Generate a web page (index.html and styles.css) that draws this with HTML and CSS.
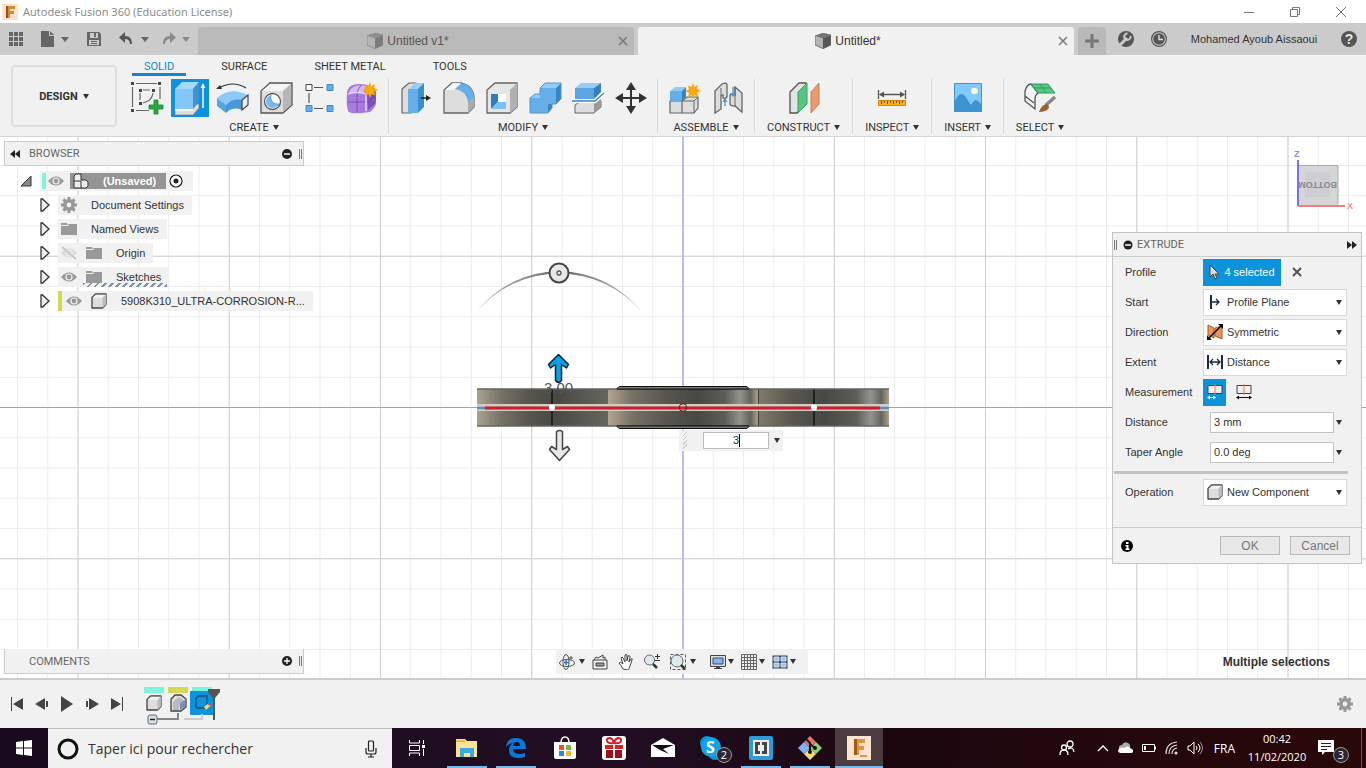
FILE: index.html
```html
<!DOCTYPE html>
<html lang="en">
<head>
    <meta charset="UTF-8">
    <meta name="viewport" content="width=device-width, initial-scale=1.0">
    <title>Autodesk Fusion 360 (Education License)</title>
    <link rel="stylesheet" href="styles.css">
</head>
<body>
    <!-- shared icons -->
    <svg class="defs" aria-hidden="true">
        <symbol id="eye" viewBox="0 0 16 16">
            <path d="M0 8Q8-1 16 8Q8 17 0 8Z" fill="#999"/>
            <circle cx="8" cy="8" r="3.6" fill="#f1f1f1"/>
            <circle cx="8" cy="8" r="2.4" fill="#999"/>
        </symbol>
        <symbol id="folder" viewBox="0 0 16 16">
            <path d="M0 2h6l1 2H0zM8 3h8v11H0V5h7z" fill="#999"/>
        </symbol>
        <symbol id="gear" viewBox="0 0 16 16">
            <circle cx="8" cy="8" r="4.2" fill="none" stroke="#999" stroke-width="3.6"/>
            <path d="M8 0v3M8 13v3M0 8h3M13 8h3M2.4 2.4l2 2M11.6 11.6l2 2M2.4 13.6l2-2M11.6 4.4l2-2" stroke="#999" stroke-width="3"/>
        </symbol>
        <symbol id="expand" viewBox="0 0 10 14">
            <path d="M1 1h1.5L9 7l-6.500 6H1z" fill="#eee" stroke="#333" stroke-width="1.300"/>
        </symbol>
        <symbol id="cube" viewBox="0 0 16 16">
            <path d="M1 4.500L4.500 1H15v10.500L11.500 15H1z" fill="#ddd" stroke="#444" stroke-width="1.300" stroke-linejoin="round"/>
            <path d="M11.500 5L15 1v10.500L11.500 15z" fill="#bbb"/>
            <path d="M1.700 4.700L4.800 1.700h9.500l-3 3z" fill="#f4f4f4"/>
        </symbol>
        <symbol id="doc" viewBox="0 0 16 16">
            <path d="M0 3l8-3 8 2-8 4z" fill="#777"/>
            <path d="M0 3l8 2.500V16L0 12z" fill="#b4b4b4"/>
            <path d="M8 5.500L16 2v10l-8 4z" fill="#555"/>
            <path d="M0 3l8-2.500 8 1.500v10l-8 3.500L0 12z" fill="none" stroke="#666" stroke-width=".8"/>
        </symbol>
        <symbol id="spark" viewBox="0 0 16 16">
            <path d="M8 0l1.500 4L13 2l-1 3.800L16 8l-4 1.500 1.500 4L9.500 12 8 16l-1.600-4L3 14l1-4-4-2 4-1.700L2.500 2.500 6.400 4z" fill="#f9a70d"/>
        </symbol>
    </svg>

    <header class="titlebar">
        <svg class="app-logo" width="16" height="16" viewBox="0 0 16 16">
            <rect width="16" height="16" fill="#fbe3cd"/>
            <path d="M4 2h9v3H8v2h4v3H8v4H4z" fill="#d98a2e"/>
            <path d="M4 2h2v12H4z" fill="#9c5311"/>
        </svg>
        <span class="app-title">Autodesk Fusion 360 (Education License)</span>
        <div class="window-buttons">
            <button aria-label="Minimize"><svg width="12" height="12"><path d="M1 6.500h10" stroke="#777"/></svg></button>
            <button aria-label="Restore"><svg width="12" height="12" fill="none" stroke="#777"><path d="M1.500 3.500h7v7h-7zM3.500 3.500v-2h7v7h-2"/></svg></button>
            <button aria-label="Close"><svg width="12" height="12"><path d="M1 1l10 10M11 1L1 11" stroke="#777"/></svg></button>
        </div>
    </header>

    <div class="tabbar">
        <div class="quick">
            <button aria-label="Data panel"><svg width="14" height="14" fill="#666"><path d="M0 0h4v4H0zM5 0h4v4H5zM10 0h4v4h-4zM0 5h4v4H0zM5 5h4v4H5zM10 5h4v4h-4zM0 10h4v4H0zM5 10h4v4H5zM10 10h4v4h-4z"/></svg></button>
            <button aria-label="File"><svg width="14" height="16" fill="#666"><path d="M0 0h8v5h5v11H0zM9 0l4 4H9z"/></svg><i class="caret"></i></button>
            <button aria-label="Save"><svg width="14" height="14"><path d="M0 0h12l2 2v12H0z" fill="#666"/><path d="M3 1h8v5H3zM2 8h10v5H2z" fill="#cbcbcb"/><path d="M7 1h2v4H7zM4 9h6v1H4zM4 11h6v1H4z" fill="#666"/></svg></button>
            <button aria-label="Undo"><svg width="14" height="14"><path d="M6 0v4c5 0 7 3 7 8h-2c0-3-2-5-5-5v4L0 5.500z" fill="#555"/></svg><i class="caret"></i></button>
            <button aria-label="Redo" class="off"><svg width="14" height="14"><path d="M8 0v4c-5 0-7 3-7 8h2c0-3 2-5 5-5v4l6-5.500z" fill="#888"/></svg><i class="caret"></i></button>
        </div>
        <div class="doc-tab">
            <span class="doc-name"><svg width="16" height="16" opacity=".6"><use href="#doc"/></svg>Untitled v1*</span>
            <button aria-label="Close Untitled v1"><svg width="10" height="10"><path d="M1 1l8 8M9 1L1 9" stroke="#777" stroke-width="1.500"/></svg></button>
        </div>
        <div class="doc-tab active">
            <span class="doc-name"><svg width="16" height="16"><use href="#doc"/></svg>Untitled*</span>
            <button aria-label="Close Untitled"><svg width="10" height="10"><path d="M1 1l8 8M9 1L1 9" stroke="#777" stroke-width="1.500"/></svg></button>
        </div>
        <button class="new-tab" aria-label="New tab"><svg width="14" height="14"><path d="M7 0v14M0 7h14" stroke="#777" stroke-width="3"/></svg></button>
        <div class="account">
            <button aria-label="Extensions"><svg width="16" height="16"><circle cx="8" cy="8" r="8" fill="#555"/><path d="M2 14l7-7" stroke="#cbcbcb" stroke-width="3"/><path d="M12.500 5a3.200 3.200 0 1 1-3-2.500" fill="none" stroke="#cbcbcb" stroke-width="2"/></svg></button>
            <button aria-label="Job status"><svg width="16" height="16"><circle cx="8" cy="8" r="7.400" fill="none" stroke="#555" stroke-width="1.200"/><circle cx="8" cy="8" r="5.800" fill="#555"/><path d="M8 4v4.500h4" fill="none" stroke="#ddd" stroke-width="1.400"/></svg></button>
            <button class="user">Mohamed Ayoub Aissaoui</button>
            <button class="help" aria-label="Help">?</button>
        </div>
    </div>

    <div class="ribbon">
        <button class="workspace">DESIGN <i class="caret"></i></button>
        <div class="ribbon-main">
            <nav class="ribbon-tabs">
                <a href="#solid" class="active">SOLID</a>
                <a href="#surface">SURFACE</a>
                <a href="#sheet">SHEET METAL</a>
                <a href="#tools">TOOLS</a>
            </nav>
            <div class="groups">
                <div class="group">
                    <div class="tools">
                        <button aria-label="Create sketch"><svg width="38" height="38">
                            <path d="M8 4.500h21M4.500 8v20M8 31.500h13M32 8v12M15 11h7M12 14v7M25 14Q24 22 15 24" fill="none" stroke="#666" stroke-width="1.200"/>
                            <path d="M3 3h3v3H3zM30 3h3v3h-3zM3 30h3v3H3zM11 10h3v3h-3zM24 10h3v3h-3zM11 23h3v3h-3z" fill="#444"/>
                            <path d="M26 21h4v5h5v4h-5v5h-4v-5h-5v-4h5z" fill="#27a843" stroke="#168a35" stroke-width=".8"/>
                        </svg></button>
                        <button aria-label="Extrude" class="on"><svg width="38" height="38">
                            <path d="M4 31l7-6h17v4l-6 7H4z" fill="#ddd" stroke="#777" stroke-width=".6"/>
                            <path d="M4 10l7-7h17l-6 7z" fill="#a6d8fb"/><path d="M4 10h18v20H4z" fill="#85c6f9"/>
                            <path d="M22 10l6-7v20l-6 7z" fill="#3e93d3"/><path d="M4 31h18" stroke="#fff" stroke-width="1.500"/>
                            <path d="M32 7v22" stroke="#fff" stroke-width="1.400"/><path d="M32 4l2.500 5h-5z" fill="#fff"/>
                        </svg></button>
                        <button aria-label="Revolve"><svg width="38" height="38">
                            <path d="M3 19Q16 7 34 16l-6 5q-9-3-16 5z" fill="#8ccafa"/>
                            <path d="M3 19l9 7v8l-9-7z" fill="#58a5e2"/><path d="M12 26q7-8 16-5v10q-9-4-16 3z" fill="#4698da"/>
                            <path d="M28 21l6-5v10l-6 5z" fill="#eee" stroke="#444" stroke-width="1.200"/>
                            <path d="M5 9Q19 1 32 9" fill="none" stroke="#333" stroke-width="1.200"/><path d="M2 10l4-4 2 4z" fill="#333"/>
                        </svg></button>
                        <button aria-label="Hole"><svg width="38" height="38">
                            <path d="M4 12l9-8h22v22l-9 8H4z" fill="#ddd" stroke="#555" stroke-width="1.300"/>
                            <path d="M5 12l8-7h21l-8 7z" fill="#f5f5f5"/><path d="M26 12l8-7v21l-8 7z" fill="#b6b6b6"/>
                            <circle cx="15.500" cy="22.500" r="8" fill="#fff" stroke="#555" stroke-width="1.300"/>
                            <path d="M14 16a7 7 0 0 0 8 9q-2 4-7 4-6-1-6-7 1-5 5-6z" fill="#77baf0"/><path d="M14 16a7 7 0 0 0 8 9" fill="none" stroke="#4a97d2"/>
                        </svg></button>
                        <button aria-label="Pattern"><svg width="38" height="38">
                            <path d="M14 8.500h9M9 14v10M14 29.500h9" stroke="#555" stroke-width="1.200"/>
                            <path d="M6 5.500h6v6H6z" fill="#fff" stroke="#444"/>
                            <path d="M27 5.500h6v6h-6zM6 26.500h6v6H6zM27 26.500h6v6h-6z" fill="#64ade8" stroke="#3f8ac4"/>
                        </svg></button>
                        <button aria-label="Create form"><svg width="38" height="38">
                            <path d="M4 15q0-10 12-10 17 0 17 10v9q0 4-6 9-20 3-22-1-2-7-1-17z" fill="#a57be0"/>
                            <path d="M6 13q4-9 17-6l-2 7q-10-1-15 1z" fill="#d1b9f5"/><path d="M24 16l8-5q2 7 0 14l-7 6z" fill="#7f50bb"/>
                            <path d="M5 23h20l7-7M14 14v19M14 13l4-7" fill="none" stroke="#6d45a5" stroke-width=".8"/>
                            <path d="M5 15q8-3 18 0v17" fill="none" stroke="#e4d6fa" stroke-width="1.500"/>
                            <use href="#spark" x="19" y="3" width="16" height="16"/>
                        </svg></button>
                    </div>
                    <button class="group-name">CREATE <i class="caret"></i></button>
                </div>
                <div class="group">
                    <div class="tools">
                        <button aria-label="Press pull"><svg width="38" height="38">
                            <path d="M5 10l7-6h7v24l-5 6H5z" fill="#ddd" stroke="#666" stroke-width="1.200"/>
                            <path d="M12 10l6-6h9l-6 6z" fill="#94cffb"/><path d="M11 10h10v24H11z" fill="#65aee7"/><path d="M21 10l6-6v24l-6 6z" fill="#3a8ccb"/>
                            <path d="M24 19h8" stroke="#222" stroke-width="1.500"/><path d="M29 16l5 3-5 3z" fill="#222"/>
                        </svg></button>
                        <button aria-label="Fillet"><svg width="38" height="38">
                            <path d="M4 11l8-7h9q13 3 13 16v8l-6 6H4z" fill="#ddd" stroke="#666" stroke-width="1.300"/>
                            <path d="M5 11l8-7h8l-7 7z" fill="#f5f5f5"/>
                            <path d="M15 10l7-6q12 3 12 15l-6 5q-1-12-13-14z" fill="#65aee7"/><path d="M28 24l6-5v9l-6 6z" fill="#aaa"/>
                        </svg></button>
                        <button aria-label="Shell"><svg width="38" height="38">
                            <path d="M4 11l8-7h22v24l-7 6H4z" fill="#e6e6e6" stroke="#666" stroke-width="1.300"/>
                            <path d="M27 11l7-7v24l-7 6z" fill="#b0b0b0"/><path d="M8 15h15v15H8z" fill="#fff"/>
                            <path d="M8 15h7v8l-7 7z" fill="#2e7fb9"/><path d="M15 23h8v7H8z" fill="#7cc1f5"/>
                        </svg></button>
                        <button aria-label="Combine"><svg width="38" height="38">
                            <path d="M4 19h10V9h16v16h-5l-3 0v9H4z" fill="#65aee7"/>
                            <path d="M14 9l5-5h16l-5 5zM4 19l5-4h5v4z" fill="#91cdfb"/><path d="M30 9l5-5v16l-5 5zM22 25h4v4l-4 5z" fill="#3686c3"/>
                            <path d="M4 19l5-4h5V9l5-5h16v16l-5 5h-4v4l-4 5H4z" fill="none" stroke="#4c96d2"/>
                        </svg></button>
                        <button aria-label="Split body"><svg width="38" height="38">
                            <path d="M6 26l6-4h20v6l-7 6H6z" fill="#ddd" stroke="#666"/><path d="M25 25l7-5v8l-7 6z" fill="#999"/>
                            <path d="M6 9l6-5h20l-7 5z" fill="#95cefb"/><path d="M6 9h19v11H6z" fill="#5ba6e1"/><path d="M25 9l7-5v9l-7 7z" fill="#3380bc"/>
                            <path d="M3 22h23l9-8" fill="none" stroke="#fff" stroke-width="4"/><path d="M3 22h23l9-8" fill="none" stroke="#2d87c6" stroke-width="1.300"/>
                        </svg></button>
                        <button aria-label="Move"><svg width="38" height="38">
                            <path d="M19 8v22M8 19h22" stroke="#333" stroke-width="2"/>
                            <path d="M19 3l5 8H14zM19 35l5-8H14zM3 19l8-5v10zM35 19l-8-5v10z" fill="#333"/>
                        </svg></button>
                    </div>
                    <button class="group-name">MODIFY <i class="caret"></i></button>
                </div>
                <div class="group">
                    <div class="tools">
                        <button aria-label="New component"><svg width="38" height="38">
                            <path d="M4 22h12v12H4zM16 22l5-4h11v11l-4 5H16z" fill="#ddd" stroke="#666" stroke-width="1.200"/><path d="M16 22h12v12M28 22l4-4" fill="none" stroke="#666"/>
                            <path d="M4 12l5-4h11l-4 4z" fill="#8dcbfa"/><path d="M4 12h12v10H4z" fill="#65aee7"/><path d="M16 12l4-4v10l-4 4z" fill="#3585c0"/>
                            <use href="#spark" x="19" y="4" width="16" height="16"/>
                        </svg></button>
                        <button aria-label="Joint"><svg width="38" height="38">
                            <path d="M6 12l7-7q5-2 5 1v12q-2 2-4 1v-3l-2 1v13l-6 4z" fill="#ddd" stroke="#666" stroke-width="1.300"/>
                            <path d="M26 8l7 6v19l-7-6q-5 0-5-2v-9q2-2 5 0z" fill="#ddd" stroke="#666" stroke-width="1.300"/>
                            <path d="M26 8v19M12 9v8" stroke="#666"/><path d="M16 21v6M24 8v8M22 14l2 3 2-3M14 23l2-3 2 3" fill="none" stroke="#3f97cf" stroke-width="1.300"/>
                        </svg></button>
                    </div>
                    <button class="group-name">ASSEMBLE <i class="caret"></i></button>
                </div>
                <div class="group wide">
                    <div class="tools">
                        <button aria-label="Offset plane"><svg width="38" height="38">
                            <path d="M5 13l9-9h7v20l-9 10H5z" fill="#e4e4e4" stroke="#555" stroke-width="1.300"/>
                            <path d="M13 13l9-9v21l-9 9z" fill="#58c681" stroke="#36a465"/><path d="M26 13l8-9v21l-8 9z" fill="#e79d6f" stroke="#cf7d4b"/>
                        </svg></button>
                    </div>
                    <button class="group-name">CONSTRUCT <i class="caret"></i></button>
                </div>
                <div class="group wide">
                    <div class="tools">
                        <button aria-label="Measure"><svg width="38" height="38">
                            <path d="M5.500 11v9M32.500 11v9M7 15.500h24" stroke="#555" stroke-width="1.300"/><path d="M6 15.500l5-3v6zM32 15.500l-5-3v6z" fill="#555"/>
                            <path d="M5.500 21.500h27v5h-27z" fill="#fbb018" stroke="#d28300"/><path d="M8.500 22v3M11.500 22v2M14.500 22v3M17.500 22v2M20.500 22v3M23.500 22v2M26.500 22v3M29.500 22v2" stroke="#704d00"/>
                        </svg></button>
                    </div>
                    <button class="group-name">INSPECT <i class="caret"></i></button>
                </div>
                <div class="group wide">
                    <div class="tools">
                        <button aria-label="Insert image"><svg width="38" height="38">
                            <path d="M5 4h28v29H5z" fill="#80c8fd"/><path d="M5 25q6-17 13-5l4 6q4-7 7-4l4 4v7H5z" fill="#3e94cf"/>
                            <circle cx="25.500" cy="12" r="3.300" fill="#fffbd0"/><path d="M5.500 4.500h27v28h-27z" fill="none" stroke="#4693c9"/>
                        </svg></button>
                    </div>
                    <button class="group-name">INSERT <i class="caret"></i></button>
                </div>
                <div class="group wide last">
                    <div class="tools">
                        <button aria-label="Select"><svg width="38" height="38">
                            <path d="M4 12q2-7 6-7l7 9q-3 2-3 6v10l-10-8zM4 17l9 7" fill="#f4f4f4" stroke="#555" stroke-width="1.300"/>
                            <path d="M10 5h17l7 9H17z" fill="#58c681" stroke="#2e9d5b"/><path d="M19 5l6 9M13 9h17" stroke="#349f60"/>
                            <path d="M25 26l9-8" stroke="#888" stroke-width="3.500"/><path d="M18 33q3-8 8-8 4 3 0 6-3 2-8 2z" fill="#94642e"/>
                        </svg></button>
                    </div>
                    <button class="group-name">SELECT <i class="caret"></i></button>
                </div>
            </div>
        </div>
    </div>

    <main class="viewport">
        <svg class="scene" width="100%" height="100%">
            <defs>
                <pattern id="minor" x="-0.500" y="-0.500" width="30.250" height="30.250" patternUnits="userSpaceOnUse"><path d="M0 .5h31M.5 0v31" stroke="#ececec"/></pattern>
                <pattern id="major" x="-0.500" y="-0.500" width="151.250" height="151.250" patternUnits="userSpaceOnUse"><path d="M0 .5h152M.5 0v152" stroke="#cfcfcf"/></pattern>
                <linearGradient id="left"><stop offset="0" stop-color="#aca28f"/><stop offset=".18" stop-color="#777268"/><stop offset=".38" stop-color="#58564f"/><stop offset=".6" stop-color="#494843"/><stop offset="1" stop-color="#66655e"/></linearGradient>
                <linearGradient id="mid"><stop offset="0" stop-color="#b1a690"/><stop offset=".16" stop-color="#787267"/><stop offset=".38" stop-color="#58564f"/><stop offset=".6" stop-color="#484743"/><stop offset=".78" stop-color="#5c5c58"/><stop offset=".88" stop-color="#92928e"/><stop offset=".95" stop-color="#66645b"/><stop offset="1" stop-color="#aca18c"/></linearGradient>
                <linearGradient id="right"><stop offset="0" stop-color="#817b6e"/><stop offset=".25" stop-color="#59574f"/><stop offset=".5" stop-color="#484743"/><stop offset=".75" stop-color="#5c5c58"/><stop offset=".86" stop-color="#93938f"/><stop offset=".94" stop-color="#66645b"/><stop offset="1" stop-color="#aca18c"/></linearGradient>
                <linearGradient id="fade"><stop offset="0" stop-color="#777" stop-opacity="0"/><stop offset=".35" stop-color="#888"/><stop offset=".5" stop-color="#555"/><stop offset=".65" stop-color="#888"/><stop offset="1" stop-color="#777" stop-opacity="0"/></linearGradient>
            </defs>
            <svg x="50%" y="50%" overflow="visible">
                <rect x="-3000" y="-2000" width="6000" height="4000" fill="url(#minor)"/>
                <rect x="-3000" y="-2000" width="6000" height="4000" fill="url(#major)"/>
                <rect x="-3000" y="-1" width="6000" height="2" fill="#fff"/>
                <rect x="-3000" y="-0.500" width="6000" height="1" fill="#e08c8c"/>
                <path d="M0-2000V2000" stroke="#b9b9f8" stroke-width="2"/>
                <!-- part, seen from the side -->
                <path d="M-66-18v-1l2-2H64l2 2v1zM-66 18v1l2 2H64l2-2v-1z" fill="#777" stroke="#111"/>
                <rect x="-206" y="-18" width="132" height="36" fill="url(#left)"/>
                <rect x="-75" y="-18" width="150" height="36" fill="url(#mid)"/>
                <rect x="75" y="-18" width="131" height="36" fill="url(#right)"/>
                <path d="M-206-18.500H206M-206 18.500H206" stroke="#161616" stroke-width="1.200"/>
                <path d="M-131-18v36M131-18v36" stroke="#1d1d1a" stroke-width="1.800"/>
                <path d="M75.500-18v36" stroke="#3c3a35"/>
                <path d="M-206 0H206" stroke="#d0ccc8" stroke-width="7"/>
                <path d="M-206 .5H206" stroke="#578fbe" stroke-width="2.500"/>
                <path d="M-198 .5H197" stroke="#cf2026" stroke-width="3"/>
                <circle cx="-131" cy="0" r="3" fill="#fff"/><circle cx="131" cy="0" r="3" fill="#fff"/>
                <circle r="3.800" fill="none" stroke="#5c2020"/>
                <!-- drag handles -->
                <path d="M-207-95A105 105 0 0 1-41-95A107 107 0 0 0-207-95Z" fill="url(#fade)" stroke="url(#fade)"/>
                <circle cx="-124" cy="-134.500" r="9.500" fill="#e6e7e9" stroke="#444" stroke-width="2"/>
                <circle cx="-124" cy="-134.500" r="2" fill="none" stroke="#555" stroke-width="1.300"/>
                <text x="-139" y="-15" class="scene-dim">3.00</text>
                <path d="M-124.500-53l10 10-2 3.500-5-3.500v16q-3 4-6 0v-16l-5 3.500-2-3.500z" fill="#06a3e5" stroke="#123" stroke-width="1.500" stroke-linejoin="round"/>
                <path d="M-123.500 53l10-11-2-3-5 3V24q-3-2-6 0v18l-5-3-2 3z" fill="#e6e7e9" stroke="#444" stroke-width="1.500" stroke-linejoin="round"/>
            </svg>
        </svg>

        <section class="browser">
            <div class="panel-bar">
                <button aria-label="Collapse browser"><svg width="10" height="8"><path d="M5 0v8L0 4zM10 0v8L5 4z" fill="#222"/></svg></button>
                <h2>BROWSER</h2>
                <button aria-label="Minimize browser"><svg width="10" height="10"><circle cx="5" cy="5" r="5" fill="#222"/><path d="M2 5h6" stroke="#fff" stroke-width="1.500"/></svg></button>
                <i class="grip"></i>
            </div>
            <ul class="tree">
                <li class="root"><svg width="12" height="12"><path d="M11 1v10H1z" fill="#888" stroke="#333"/></svg>
                    <div class="node"><i class="stripe cyan"></i><svg width="16" height="16"><use href="#eye"/></svg>
                        <span class="doc-root"><svg width="16" height="16" fill="#eee" stroke="#333"><path d="M1 3l2-2h5v6h5l2 2v4l-2 2H1zM1 8h7v7"/></svg>(Unsaved)</span>
                        <svg width="14" height="14"><circle cx="7" cy="7" r="6" fill="#fff" stroke="#222" stroke-width="1.200"/><circle cx="7" cy="7" r="2.500" fill="#222"/></svg>
                    </div></li>
                <li><svg width="10" height="14"><use href="#expand"/></svg><div class="node"><svg width="16" height="16"><use href="#gear"/></svg><span>Document Settings</span></div></li>
                <li><svg width="10" height="14"><use href="#expand"/></svg><div class="node"><svg width="16" height="16"><use href="#folder"/></svg><span>Named Views</span></div></li>
                <li><svg width="10" height="14"><use href="#expand"/></svg><div class="node"><svg width="16" height="16" opacity=".25"><use href="#eye"/><path d="M1 2l14 12" stroke="#555" stroke-width="2"/></svg><svg class="second" width="16" height="16"><use href="#folder"/></svg><span>Origin</span></div></li>
                <li><svg width="10" height="14"><use href="#expand"/></svg><div class="node hatched"><svg width="16" height="16"><use href="#eye"/></svg><svg class="second" width="16" height="16"><use href="#folder"/></svg><span>Sketches</span></div></li>
                <li><svg width="10" height="14"><use href="#expand"/></svg><div class="node"><i class="stripe lime"></i><svg width="16" height="16"><use href="#eye"/></svg><svg class="second" width="16" height="16"><use href="#cube"/></svg><span>5908K310_ULTRA-CORROSION-R...</span></div></li>
            </ul>
        </section>

        <svg class="viewcube" width="64" height="64">
            <path d="M9 17l40 1v39H9z" fill="#d6d6d6"/><path d="M16 24h25v25H16z" fill="#cdced3"/>
            <path d="M9 17.500h40v39" fill="none" stroke="#aaa"/>
            <text x="-48" y="-34" transform="rotate(180)" class="cube-face">BOTTOM</text>
            <path d="M9 12v46" stroke="#7474ee" stroke-width="2"/><path d="M9 58h47" stroke="#f47c7c" stroke-width="2"/>
            <text x="5" y="9" fill="#8a8af0" class="axis">Z</text><text x="58" y="61" fill="#f48c8c" class="axis">X</text>
        </svg>

        <div class="value-box">
            <i class="dots"></i>
            <div class="entry"><input type="text" value="3" aria-label="Distance value"><i class="cursor"></i></div>
            <i class="caret"></i>
        </div>

        <form class="dialog">
            <div class="dialog-head">
                <i class="grip"></i>
                <svg width="10" height="10"><circle cx="5" cy="5" r="4.500" fill="#222"/><path d="M2 5h6" stroke="#fff" stroke-width="1.500"/></svg>
                <h2>EXTRUDE</h2>
                <svg width="10" height="8"><path d="M0 0l5 4-5 4zM5 0l5 4-5 4z" fill="#222"/></svg>
            </div>
            <div class="field"><label for="profile">Profile</label>
                <button type="button" id="profile" class="selected"><svg width="10" height="16"><path d="M1 1v12l3-3 2 5 2-1-2-4h4z" fill="#ddd" stroke="#444"/></svg>4 selected</button>
                <button type="button" class="clear" aria-label="Clear selection"><svg width="10" height="10"><path d="M1 1l8 8M9 1L1 9" stroke="#555" stroke-width="2"/></svg></button>
            </div>
            <div class="field"><label for="start">Start</label>
                <div class="pick"><svg width="16" height="16" stroke="#1b2a44"><path d="M4 1v14" stroke-width="2"/><path d="M4 8h8M9 5l3 3-3 3" fill="none" stroke-width="1.300"/></svg><select id="start"><option>Profile Plane</option></select><i class="caret"></i></div>
            </div>
            <div class="field"><label for="direction">Direction</label>
                <div class="pick"><svg width="16" height="16"><path d="M1 1l6 3v10l-6-3zM8 4l7-2v13l-7-3z" fill="#e8975b" stroke="#a55a25"/><path d="M2 14L14 2" stroke="#111" stroke-width="1.600"/><path d="M0 16v-5l5 5zM16 0v5l-5-5z" fill="#111"/></svg><select id="direction"><option>Symmetric</option></select><i class="caret"></i></div>
            </div>
            <div class="field"><label for="extent">Extent</label>
                <div class="pick"><svg width="16" height="16" stroke="#1b2a44"><path d="M1 1v14M15 1v14" stroke-width="2"/><path d="M3 8h10M6 5L3 8l3 3M10 5l3 3-3 3" fill="none" stroke-width="1.300"/></svg><select id="extent"><option>Distance</option></select><i class="caret"></i></div>
            </div>
            <div class="field"><label for="half">Measurement</label>
                <button type="button" id="half" class="measure on" aria-label="Half length"><svg width="16" height="16"><path d="M1 1.500h14v8H1z" fill="#eee" stroke="#444"/><path d="M8 0v11" stroke="#f08040"/><path d="M1 13.500h7" stroke="#fff"/><path d="M0 13.500l3-2v4zM9 13.500l-3-2v4z" fill="#fff"/></svg></button>
                <button type="button" class="measure" aria-label="Whole length"><svg width="16" height="16"><path d="M1 1.500h14v8H1z" fill="#eee" stroke="#444"/><path d="M8 0v11" stroke="#f08040"/><path d="M1 13.500h14" stroke="#111"/><path d="M0 13.500l3-2v4zM16 13.500l-3-2v4z" fill="#111"/></svg></button>
            </div>
            <div class="field"><label for="distance">Distance</label><input type="text" id="distance" value="3 mm"><i class="caret"></i></div>
            <div class="field"><label for="taper">Taper Angle</label><input type="text" id="taper" value="0.0 deg"><i class="caret"></i></div>
            <hr>
            <div class="field"><label for="operation">Operation</label>
                <div class="pick"><svg width="16" height="16"><use href="#cube"/></svg><select id="operation"><option>New Component</option></select><i class="caret"></i></div>
            </div>
            <div class="dialog-foot">
                <svg width="12" height="12"><circle cx="6" cy="6" r="6" fill="#000"/><path d="M5 2h2.500v2H5zM4.500 5h3v3.500h1V10h-4V8.500h1v-2h-1z" fill="#fff"/></svg>
                <button type="button">OK</button>
                <button type="button">Cancel</button>
            </div>
        </form>

        <section class="comments panel-bar">
            <h2>COMMENTS</h2>
            <button aria-label="Add comment"><svg width="10" height="10"><circle cx="5" cy="5" r="5" fill="#222"/><path d="M2 5h6M5 2v6" stroke="#fff" stroke-width="1.300"/></svg></button>
            <i class="grip"></i>
        </section>

        <div class="navbar">
            <button aria-label="Orbit"><svg width="16" height="16" fill="none" stroke="#555"><ellipse cx="8" cy="9" rx="7.500" ry="3.500"/><ellipse cx="7" cy="8" rx="3" ry="7.500"/><path d="M7 6v5M5 8.500h5" stroke="#2c6ebb" stroke-width="1.300"/><path d="M12 2v4M10 4h4"/></svg><i class="caret"></i></button>
            <button aria-label="Look at"><svg width="16" height="16" fill="#eee" stroke="#444"><path d="M2 6l2-3 2 1 5-3v3l2-1v3M1 6h14v9H1z"/><path d="M4 9h8v3H4z" fill="#999"/></svg></button>
            <button aria-label="Pan"><svg width="16" height="16"><path d="M5 15q-2-4-4-6 1-2 4 1L3 4q1-2 2 0l2 4V1q1-1 2 0v6l1-5q2-1 2 1l-1 5 2-3q2-1 1 1l-2 6q-1 3-2 4z" fill="#fff" stroke="#444"/></svg></button>
            <button aria-label="Zoom"><svg width="16" height="16"><circle cx="5.500" cy="6" r="5" fill="#dceaf0" stroke="#666"/><path d="M9 10l4 4" stroke="#333" stroke-width="2.500"/><path d="M13.500 0v5M11 2.500h5M11 6.500h5" stroke="#333"/></svg></button>
            <button aria-label="Fit"><svg width="16" height="16"><path d="M.5.5h15v15H.5z" fill="none" stroke="#555" stroke-dasharray="3 2"/><circle cx="7" cy="7" r="6" fill="#dceaf0" stroke="#666"/><path d="M11 11l4 4" stroke="#333" stroke-width="2.500"/></svg><i class="caret"></i></button>
            <button aria-label="Display settings" class="apart"><svg width="16" height="16"><path d="M.5 1.500h15v11H.5z" fill="#ddd" stroke="#444"/><path d="M3 4h10v6H3z" fill="#8bb4e5" stroke="#2b4d7a"/><path d="M6 12h4v2h2v1H4v-1h2z" fill="#444"/></svg><i class="caret"></i></button>
            <button aria-label="Grid settings"><svg width="16" height="16"><path d="M.5.5h15v15H.5zM3.500 1v14M6.500 1v14M9.500 1v14M12.500 1v14M1 3.500h14M1 6.500h14M1 9.500h14M1 12.500h14" fill="#eee" stroke="#666"/></svg><i class="caret"></i></button>
            <button aria-label="Viewports"><svg width="16" height="16"><path d="M.5 1.500h15v13H.5z" fill="#345"/><path d="M2 3h5v4H2zM9 3h5v4H9zM2 9h5v4H2zM9 9h5v4H9z" fill="#9fc0ea" stroke="#d6e5f8"/></svg><i class="caret"></i></button>
        </div>

        <p class="status">Multiple selections</p>
    </main>

    <div class="timeline">
        <div class="playback">
            <button aria-label="Go to start"><svg width="14" height="14" fill="#444"><path d="M1 0h1v14H1zM13 1v12L3 7z"/></svg></button>
            <button aria-label="Step back"><svg width="14" height="14" fill="#444"><path d="M10 1v12L0 7zM11 4h2v6h-2z"/></svg></button>
            <button aria-label="Play"><svg width="14" height="16" fill="#444"><path d="M1 0l12 8-12 8z"/></svg></button>
            <button aria-label="Step forward"><svg width="14" height="14" fill="#444"><path d="M4 1v12l10-6zM1 4h2v6H1z"/></svg></button>
            <button aria-label="Go to end"><svg width="14" height="14" fill="#444"><path d="M12 0h1v14h-1zM1 1v12l10-6z"/></svg></button>
        </div>
        <svg class="history" width="80" height="40">
            <path d="M0 2h20v6H0z" fill="#7bf5dc"/><path d="M24 2h20v6H24z" fill="#d4d955"/><path d="M48 2h20v6H48z" fill="#7bf5dc"/>
            <use href="#cube" x="2" y="10" width="16" height="16"/>
            <path d="M27 14l4-4h6l5 4v8l-5 4H27z" fill="#ddd" stroke="#444" stroke-width="1.300"/><path d="M29 17l6-5 6 4-5 2-1 7h-6z" fill="#b3bcc9"/><path d="M36 18l5-3v7l-5 3z" fill="#7e8fa5"/>
            <rect x="46" y="6" width="24" height="24" rx="1" fill="#0c93dc"/><path d="M52 13l3-2h8v9q0 3-3 3h-6q-2 0-2-2z" fill="none" stroke="#17527b" stroke-width="1.300"/>
            <path d="M60 22l5-4 1 3-4 4z" fill="#f0db5c"/><path d="M64 19h3" stroke="#df4d45" stroke-width="2"/>
            <path d="M10 34h24v-6" fill="none" stroke="#888" stroke-width="2"/><path d="M40 34h18v-5" fill="none" stroke="#ccc" stroke-width="2"/>
            <rect x="4" y="30" width="9" height="9" rx="2" fill="#d7e0ee" stroke="#666"/><path d="M6 34.500h5" stroke="#222" stroke-width="1.500"/>
            <path d="M64 4h12v3l-5 6h-2l-5-6z" fill="#555"/><path d="M70 8v27" stroke="#555" stroke-width="2"/>
        </svg>
        <button class="settings" aria-label="Timeline settings"><svg width="16" height="16"><use href="#gear"/></svg></button>
    </div>

    <footer class="taskbar">
        <button class="start" aria-label="Start"><svg width="16" height="16" fill="#fff"><path d="M0 2l7-1v6.500H0zM8 1l8-1v7.500H8zM0 8.500h7V15l-7-1zM8 8.500h8V16l-8-1z"/></svg></button>
        <div class="search">
            <svg width="22" height="22"><circle cx="11" cy="11" r="9" fill="none" stroke="#111" stroke-width="3"/></svg>
            <input type="text" placeholder="Taper ici pour rechercher" aria-label="Rechercher">
            <svg width="12" height="18" fill="none" stroke="#222" stroke-width="1.200"><rect x="3.500" y="1" width="5" height="10" rx="1"/><path d="M1 8v4q0 2 2 2h6q2 0 2-2V8M6 14v3M3 17h6"/></svg>
        </div>
        <div class="apps">
            <button class="taskview" aria-label="Task view"><svg width="18" height="16" fill="none" stroke="#fff"><path d="M1.500 0v3h10V0M1.500 16v-3h10v3M1.500 5.500h10v5h-10zM15.500 0v4M15.500 9v7"/><path d="M14 5h3v3h-3z" fill="#fff" stroke="none"/></svg></button>
            <button class="open" aria-label="Explorer"><svg width="24" height="24"><path d="M1 3h9l2 2h10v16H1z" fill="#fde293"/><path d="M1 4h9v2H1z" fill="#e6b94c"/><path d="M5 12h14v9h-4v-4H9v4H5z" fill="#3ca9df"/></svg></button>
            <button class="open" aria-label="Edge"><svg width="24" height="24"><path d="M2 11Q3 2 12 2q10 0 10 11H9q0 5 7 5 3 0 5-1v4q-3 1-7 1-9 0-9-8 0-4 4-7-5 1-7 4zM9 10h7q0-4-3-4-4 0-4 4z" fill="#0b78d7" fill-rule="evenodd"/></svg></button>
            <button aria-label="Store"><svg width="24" height="24"><path d="M8 7q0-6 4-6t4 6" fill="none" stroke="#fff" stroke-width="1.500"/><path d="M1 6h22v15q0 2-2 2H3q-2 0-2-2z" fill="#fff"/><path d="M6 9h5v5H6z" fill="#ef5123"/><path d="M13 9h5v5h-5z" fill="#7eb82e"/><path d="M6 15h5v5H6z" fill="#1596d1"/><path d="M13 15h5v5h-5z" fill="#f9b51d"/></svg></button>
            <button aria-label="Gift"><svg width="24" height="24"><rect width="24" height="24" rx="3" fill="#fff"/><path d="M3 9h8v4H3zM13 9h8v4h-8z" fill="#d5222a"/><path d="M4 14h7v8H4zM13 14h7v8h-7z" fill="#9d1118"/><path d="M12 7Q6 8 5 5t3-3q3 1 4 5 1-4 4-5 4 0 3 3t-7 2z" fill="none" stroke="#d5222a" stroke-width="2"/></svg></button>
            <button aria-label="Mail"><svg width="24" height="20"><path d="M0 7l12-7 12 7v12H0z" fill="#fff"/><path d="M1 7h22l-11 4 6 5-9-4z" fill="#180c18"/></svg></button>
            <button class="skype" aria-label="Skype"><svg width="24" height="24"><circle cx="7" cy="7" r="7" fill="#0893d8"/><circle cx="15" cy="17" r="7" fill="#0893d8"/><circle cx="11" cy="11" r="10" fill="#0fa4e8"/></svg><b>S</b><span class="badge">2</span></button>
            <button class="open" aria-label="Brackets"><svg width="24" height="24"><rect width="24" height="24" rx="2" fill="#2d9bd5"/><path d="M4 4h16v16H4z" fill="#eee"/><path d="M11 6H6v12h5v-3H9V9h2zM13 6h5v12h-5v-3h2V9h-2z" fill="#444"/></svg></button>
            <button class="open" aria-label="Git"><svg width="24" height="24"><path d="M12 0l6 6-6 6-6-6z" fill="#e8726f"/><path d="M18 6l6 6-6 6-6-6z" fill="#8fd16e"/><path d="M12 12l6 6-6 6-6-6z" fill="#f4df73"/><path d="M6 6l6 6-6 6-6-6z" fill="#80b2f4"/><path d="M8 3l4 4v10M12 8l5 4" fill="none" stroke="#1b1515" stroke-width="2"/><circle cx="12" cy="16" r="2" fill="#1b1515"/><circle cx="17" cy="12" r="2" fill="#1b1515"/></svg></button>
            <button class="open current" aria-label="Fusion 360"><svg width="24" height="24"><path d="M0 0h24v24H0z" fill="#fbe4d0"/><path d="M7 3h11v4h-6v3h5v4h-5v5H7z" fill="#db9440"/><path d="M7 3h3v16H7z" fill="#a45b17"/><path d="M13 20h7" stroke="#d7934f" stroke-width="2"/></svg></button>
        </div>
        <div class="tray">
            <svg width="16" height="16" fill="none" stroke="#fff" stroke-width="1.300"><circle cx="5" cy="7.500" r="2.500"/><circle cx="11" cy="4" r="3"/><path d="M1 15q0-5 4-5t4 5M9 9q5-3 6 3"/></svg>
            <svg width="12" height="8" fill="none" stroke="#fff" stroke-width="1.300"><path d="M1 7l5-5 5 5"/></svg>
            <svg width="16" height="12"><path d="M2 8Q1 3 5 3q2-4 6-2 3 1 2 5z" fill="#aaa"/><path d="M3 11q-4-2 0-5 3-1 4 0 4-3 6 0 5 2 2 5z" fill="#fff"/></svg>
            <svg width="16" height="10" fill="none" stroke="#fff"><path d="M1.500 1.500h12v7h-12zM14.500 3.500v3"/><path d="M3 3h2v4H3z" fill="#fff" stroke="none"/></svg>
            <svg width="14" height="14" fill="none" stroke="#ddd" stroke-width="1.200"><path d="M1 13Q1 2 12 1M4 13q0-8 8-9M7 13q0-5 5-6"/><circle cx="11" cy="12" r="1" fill="#fff"/></svg>
            <svg width="16" height="14" fill="none" stroke="#fff"><path d="M1 5h2l4-4v12L3 9H1zM9 5q2 2 0 4M11 3q4 4 0 8"/><path d="M13 1q5 6 0 12" stroke="#999"/></svg>
            <span class="lang">FRA</span>
            <time class="clock"><span>00:42</span><span>11/02/2020</span></time>
            <button class="notes" aria-label="Notifications"><svg width="16" height="18"><path d="M0 1h16v12H7l-3 3v-3H0z" fill="#fff"/><path d="M3 4.500h10M3 7.500h10M3 10.500h6" stroke="#222"/></svg><span class="badge">3</span></button>
            <i class="peek"></i>
        </div>
    </footer>
</body>
</html>
```

FILE: styles.css
```css
* { box-sizing: border-box; }
body { margin: 0; height: 100vh; display: flex; flex-direction: column; overflow: hidden; font-family: "Liberation Sans", Arial, sans-serif; font-size: 11px; color: #333; background: #f1f1f1; }
button { padding: 0; border: 0; background: none; font: inherit; color: inherit; display: flex; align-items: center; justify-content: center; }
input, select { font: inherit; color: inherit; min-width: 0; }
h2, p, ul { margin: 0; padding: 0; font-weight: normal; list-style: none; }
svg { display: block; flex: none; }
.defs { width: 0; height: 0; position: absolute; }
.caret { flex: none; width: 0; height: 0; border: 3px solid transparent; border-top: 5px solid #333; border-bottom: 0; }

/* title bar */
.titlebar { height: 23px; flex: none; display: flex; align-items: center; background: #fff; padding: 0 2px; gap: 5px; }
.app-title { font-family: "Noto Sans", sans-serif; font-size: 11px; color: #8c8c8c; flex: 1; }
.window-buttons { display: flex; }
.window-buttons button { width: 46px; height: 20px; }

/* document tabs */
.tabbar { height: 32px; flex: none; display: flex; align-items: stretch; gap: 4px; background: #cbcbcb; }
.quick { width: 194px; display: flex; align-items: center; gap: 18px; padding-left: 9px; }
.quick button { gap: 6px; }
.quick button:nth-child(4) { gap: 8px; margin-right: -5px; }
.quick .caret { border-width: 4px; border-bottom: 0; border-top: 5px solid #666; }
.quick .off .caret { border-top-color: #888; }
.doc-tab { flex: 1; margin-top: 4px; display: flex; align-items: center; background: #b9b9b9; border-radius: 3px 3px 0 0; font-size: 12px; color: #555; padding-right: 6px; }
.doc-tab.active { background: #f1f1f1; color: #333; }
.doc-name { flex: 1; display: flex; justify-content: center; align-items: center; gap: 4px; }
.new-tab { width: 28px; margin-top: 4px; background: #b9b9b9; border-radius: 3px 3px 0 0; }
.account { width: 256px; display: flex; align-items: center; gap: 17px; padding: 0 9px 0 8px; }
.user { flex: 1; white-space: nowrap; }
.help { width: 16px; height: 16px; border-radius: 8px; background: #555; color: #e4e4e4; font-weight: bold; font-size: 14px; }

/* ribbon */
.ribbon { flex: none; height: 82px; display: flex; border-bottom: 1px solid #d4d4d4; padding-left: 11px; gap: 3px; font-family: Roboto, sans-serif; }
.workspace { width: 106px; height: 62px; margin-top: 10px; border: 2px solid #dedede; border-radius: 4px; font-weight: bold; gap: 5px; }
.ribbon-main { flex: 1; }
.ribbon-tabs { display: flex; gap: 23px; padding: 2px 0 0 12px; }
.ribbon-tabs a { height: 19px; line-height: 19px; padding: 0 12px; color: #333; text-decoration: none; }
.ribbon-tabs .active { color: #1187cf; border-bottom: 3px solid #1187cf; }
.groups { display: flex; padding-top: 3px; }
.group { border-right: 1px solid #d8d8d8; padding: 0 5px; height: 54px; display: flex; flex-direction: column; align-items: center; }
.group.wide { padding: 0 12px; }
.group.last { border-right: 0; }
.tools { display: flex; }
.tools button { width: 43px; height: 38px; }
.tools .on svg { background: #0c93dc; }
.group-name { height: 21px; gap: 4px; flex: none; }

/* canvas */
.viewport { flex: 1; min-height: 0; position: relative; background: #fff; overflow: hidden; }
.scene { position: absolute; inset: 0; }
.scene-dim { font: 15px "Liberation Sans", sans-serif; fill: #555; }
.cube-face { font: bold 9px "Liberation Sans", sans-serif; fill: #8b8b8f; }
.axis { font: bold 9px "Liberation Sans", sans-serif; }
.viewcube { position: absolute; top: 11px; right: 13px; width: 64px; overflow: visible; }
.status { position: absolute; right: 36px; bottom: 9px; font-weight: bold; font-size: 12px; }
.grip { width: 3px; height: 10px; border: 1px solid #777; border-width: 0 1px; }

.browser { position: absolute; left: 4px; top: 4px; width: 300px; }
.panel-bar { height: 25px; display: flex; align-items: center; gap: 9px; padding: 0 1px 0 5px; background: #f1f1f1; border: 1px solid #ccc; font-family: Roboto, sans-serif; }
.panel-bar h2 { flex: 1; font-size: 11px; color: #666; }
.panel-bar .grip { margin-left: -2px; }
.comments { position: absolute; left: 4px; bottom: 4px; width: 300px; padding-left: 24px; border-top: 0; }
.tree { padding-top: 3px; }
.tree li { height: 24px; display: flex; align-items: center; gap: 8px; padding-left: 36px; white-space: nowrap; }
.tree .root { padding-left: 16px; }
.node { height: 20px; display: flex; align-items: center; padding: 0 8px 0 3px; background: #f1f1f1; }
.node span { margin-left: 14px; }
.node .second { margin-left: 9px; }
.stripe { width: 4px; height: 20px; margin: 0 4px 0 -3px; }
.lime { background: #d4d955; }
.cyan { background: #7bf5dc; margin: 0 2px 0 -1px; height: 16px; }
.root .node { padding-right: 10px; }
.node .doc-root { display: flex; align-items: center; gap: 14px; margin: 0 3px 0 6px; padding: 0 10px 0 3px; height: 16px; background: #949494; color: #fff; font-weight: bold; }
.hatched { position: relative; }
.hatched::after { content: ""; position: absolute; left: 25px; right: 2px; bottom: 0; height: 4px; background: repeating-linear-gradient(135deg, #8291ab 0 2px, transparent 2px 5px); }

.value-box { position: absolute; left: calc(50% - 4px); top: calc(50% + 22px); width: 104px; height: 21px; display: flex; align-items: center; background: #f1f1f1; gap: 5px; padding-left: 4px; }
.entry { width: 66px; height: 17px; display: flex; align-items: center; border: 1px solid #bbb; background: #fff; }
.entry input { width: 35px; height: 15px; padding: 0; border: 0; text-align: right; background: none; }
.cursor { width: 1px; height: 13px; background: #000; }
.dots { width: 4px; height: 18px; margin-right: 11px; background: repeating-linear-gradient(135deg, #ccc 0 1px, transparent 1px 3px); }

/* extrude dialog */
.dialog { position: absolute; top: 95px; right: 4px; width: 250px; background: #f1f1f1; border: 1px solid #c4c4c4; }
.dialog-head { height: 24px; display: flex; align-items: center; gap: 6px; padding: 0 4px 0 1px; border-bottom: 1px solid #ccc; }
.dialog-head h2 { flex: 1; font: 11px Roboto, sans-serif; color: #666; margin-left: -2px; }
.field { height: 30px; display: flex; align-items: center; padding: 0 14px 0 12px; }
.field label { width: 78px; flex: none; }
.selected { width: 78px; height: 27px; gap: 5px; background: #0c93dc; color: #fff; }
.clear { margin-left: 11px; }
.pick { flex: 1; min-width: 0; height: 27px; display: flex; align-items: center; gap: 4px; padding: 0 4px 0 3px; background: #fff; border: 1px solid #d8d8d8; }
.pick select { flex: 1; appearance: none; border: 0; padding: 0; background: none; }
.measure { width: 23px; height: 27px; margin-right: 6px; }
.measure.on { background: #0c93dc; }
.field input { width: 124px; height: 21px; margin: 0 2px 0 7px; padding: 0 3px; border: 1px solid #c4c4c4; background: #fff; }
.dialog hr { margin: 4px 13px 3px 1px; border: 0; height: 3px; background: #c2c2c2; }
.dialog-foot { margin-top: 20px; height: 36px; display: flex; align-items: center; gap: 10px; padding: 0 11px 0 8px; border-top: 1px solid #ccc; }
.dialog-foot svg { margin-right: auto; }
.dialog-foot button { width: 60px; height: 19px; border: 1px solid #b8b8b8; background: #e8e8e8; font-size: 12px; color: #777; }

.navbar { position: absolute; left: 50%; bottom: 4px; width: 252px; height: 25px; margin-left: -127px; display: flex; align-items: center; gap: 10px; padding-left: 3px; background: #f1f1f1; }
.navbar button { gap: 4px; }
.navbar button:first-child { margin-right: -3px; }
.navbar .apart { margin-left: 4px; }
.navbar .apart, .navbar .apart ~ button { gap: 2px; }
.navbar .apart ~ button { margin-left: -3px; }

/* timeline */
.timeline { flex: none; height: 50px; display: flex; align-items: center; border-top: 2px solid #ccc; padding: 0 13px 0 10px; }
.playback { display: flex; gap: 11px; width: 134px; }
.history { margin-top: 1px; }
.settings { margin-left: auto; }

/* windows taskbar */
.taskbar { flex: none; height: 40px; display: flex; color: #fff; background: linear-gradient(90deg, #190a1d, #210e23 45%, #1c0710 65%, #2a0808); font-family: "Open Sans", sans-serif; }
.start { width: 48px; }
.search { width: 344px; display: flex; align-items: center; gap: 9px; padding: 0 15px 0 9px; background: #f1f1f1; border-top: 1px solid #bbb; }
.search input { flex: 1; border: 0; padding: 0; background: none; font-size: 14px; }
.search input::placeholder { color: #333; opacity: 1; }
.apps { display: flex; gap: 1px; }
.apps button { width: 48px; position: relative; }
.apps .taskview { width: 50px; }
.open::after { content: ""; position: absolute; left: 4px; right: 4px; bottom: 0; height: 2px; background: #76b9ed; }
.current { background: #4a3c3f; }
.current::after { left: 0; right: 0; }
.skype b { position: absolute; left: 18px; top: 9px; font-size: 16px; line-height: 20px; }
.badge { position: absolute; right: 4px; bottom: 5px; width: 16px; height: 16px; border: 1px solid #999; border-radius: 8px; background: #2c2730; font-size: 11px; line-height: 14px; text-align: center; }
.tray { margin-left: auto; display: flex; align-items: center; gap: 8px; }
.tray svg:first-child { margin-right: 14px; }
.lang { margin-left: 3px; font-size: 12px; }
.clock { width: 68px; font-size: 11px; line-height: 18px; display: flex; flex-direction: column; align-items: center; }
.notes { position: relative; width: 40px; height: 40px; margin-left: -6px; }
.peek { width: 1px; height: 40px; margin-right: 4px; background: #6b5656; }
```
